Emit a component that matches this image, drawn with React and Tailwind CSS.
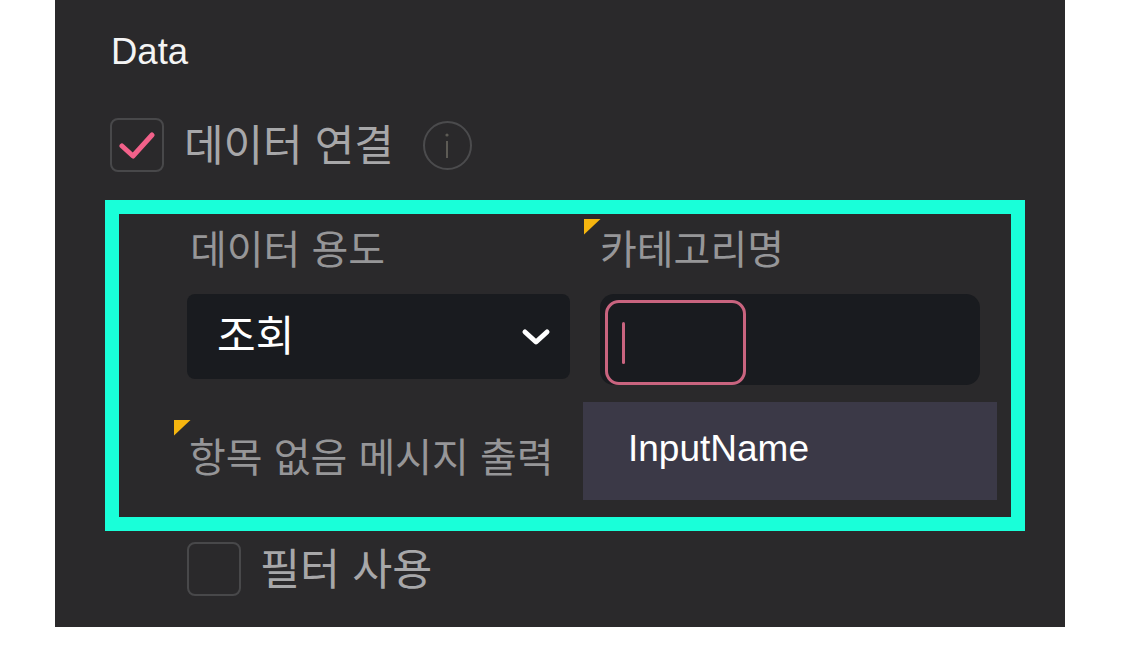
const FONT = "font-['Liberation_Sans','Noto_Sans_CJK_KR',sans-serif]";

function Check({ checked }) {
  return (
    <div className="w-[54px] h-[54px] shrink-0 rounded-lg border-2 border-[#48484a] flex items-center justify-center">
      {checked && (
        <svg width="36" height="30" viewBox="0 0 36 30" fill="none">
          <path d="M3 16 L14 26 L33 5" stroke="#f2618a" strokeWidth="5" strokeLinecap="round" strokeLinejoin="round" />
        </svg>
      )}
    </div>
  );
}

function Flag({ className }) {
  return (
    <svg className={`absolute ${className}`} width="17" height="17" viewBox="0 0 17 17">
      <path d="M0 1 L16.5 1 L0 16.5 Z" fill="#f5b50f" />
    </svg>
  );
}

export default function App() {
  return (
    <div className={`${FONT} w-[1130px] h-[648px] bg-white overflow-hidden`}>
      <div className="ml-[55px] w-[1010px] h-[627px] bg-[#2a292b] flex flex-col">
        <div className="ml-[56px] mt-[30px] h-[44px] leading-[44px] text-[36.5px] text-[#f4f4f4]">Data</div>

        <div className="ml-[55px] mt-[44px] h-[54px] flex items-center">
          <Check checked />
          <span className="ml-[20px] text-[43px] leading-[54px] relative top-[1px] text-[#a7a7a9] whitespace-nowrap">데이터 연결</span>
          <div className="ml-[29px] w-[49px] h-[49px] rounded-full border-2 border-[#4b4b4d] flex items-center justify-center">
            <svg width="8" height="30" viewBox="0 0 8 30">
              <circle cx="4" cy="5" r="1.6" fill="#5d5b55" />
              <rect x="3" y="11" width="2" height="17" fill="#5d5b55" />
            </svg>
          </div>
        </div>

        <div className="ml-[50px] mt-[28px] w-[920px] h-[331px] shrink-0 border-[14px] border-[#19ffd9] flex flex-col">
          <div className="relative flex ml-[68px] mt-[12px] h-[48px] items-center text-[40px] text-[#969698]">
            <span className="ml-[3px] w-[410px]">데이터 용도</span>
            <span>카테고리명</span>
            <Flag className="left-[397px] top-[-8px]" />
          </div>

          <div className="flex ml-[68px] mt-[20px] items-start">
            <div className="w-[383px] h-[85px] rounded-lg bg-[#191b1f] flex items-center pl-[30px] pr-[19px] justify-between">
              <span className="text-[42px] text-white">조회</span>
              <svg width="30" height="20" viewBox="0 0 30 20" fill="none">
                <path d="M4 5 L15 15 L26 5" stroke="#ffffff" strokeWidth="5" strokeLinecap="round" strokeLinejoin="round" />
              </svg>
            </div>
            <div className="ml-[30px] w-[380px] h-[91px] rounded-[14px] bg-[#191b1f] pl-[5px] pt-[6px]">
              <div className="w-[141px] h-[85px] rounded-[14px] border-[3px] border-[#c9647f] flex items-center pl-[14px]">
                <div className="w-[3px] h-[42px] bg-[#c9647f] rounded-full" />
              </div>
            </div>
          </div>

          <div className="relative flex ml-[70px] mt-[17px] items-start">
            <Flag className="left-[-15px] top-[17px]" />
            <span className="w-[394px] h-[98px] leading-[112px] text-[40px] text-[#969698] whitespace-nowrap">항목 없음 메시지 출력</span>
            <div className="w-[414px] h-[98px] bg-[#3b3947] flex items-center pl-[45px] pb-[4px] text-[37px] text-white">InputName</div>
          </div>
        </div>

        <div className="ml-[132px] mt-[11px] h-[54px] flex items-center">
          <Check />
          <span className="ml-[19px] text-[43.5px] leading-[54px] relative top-[1px] text-[#a7a7a9] whitespace-nowrap">필터 사용</span>
        </div>
      </div>
    </div>
  );
}
